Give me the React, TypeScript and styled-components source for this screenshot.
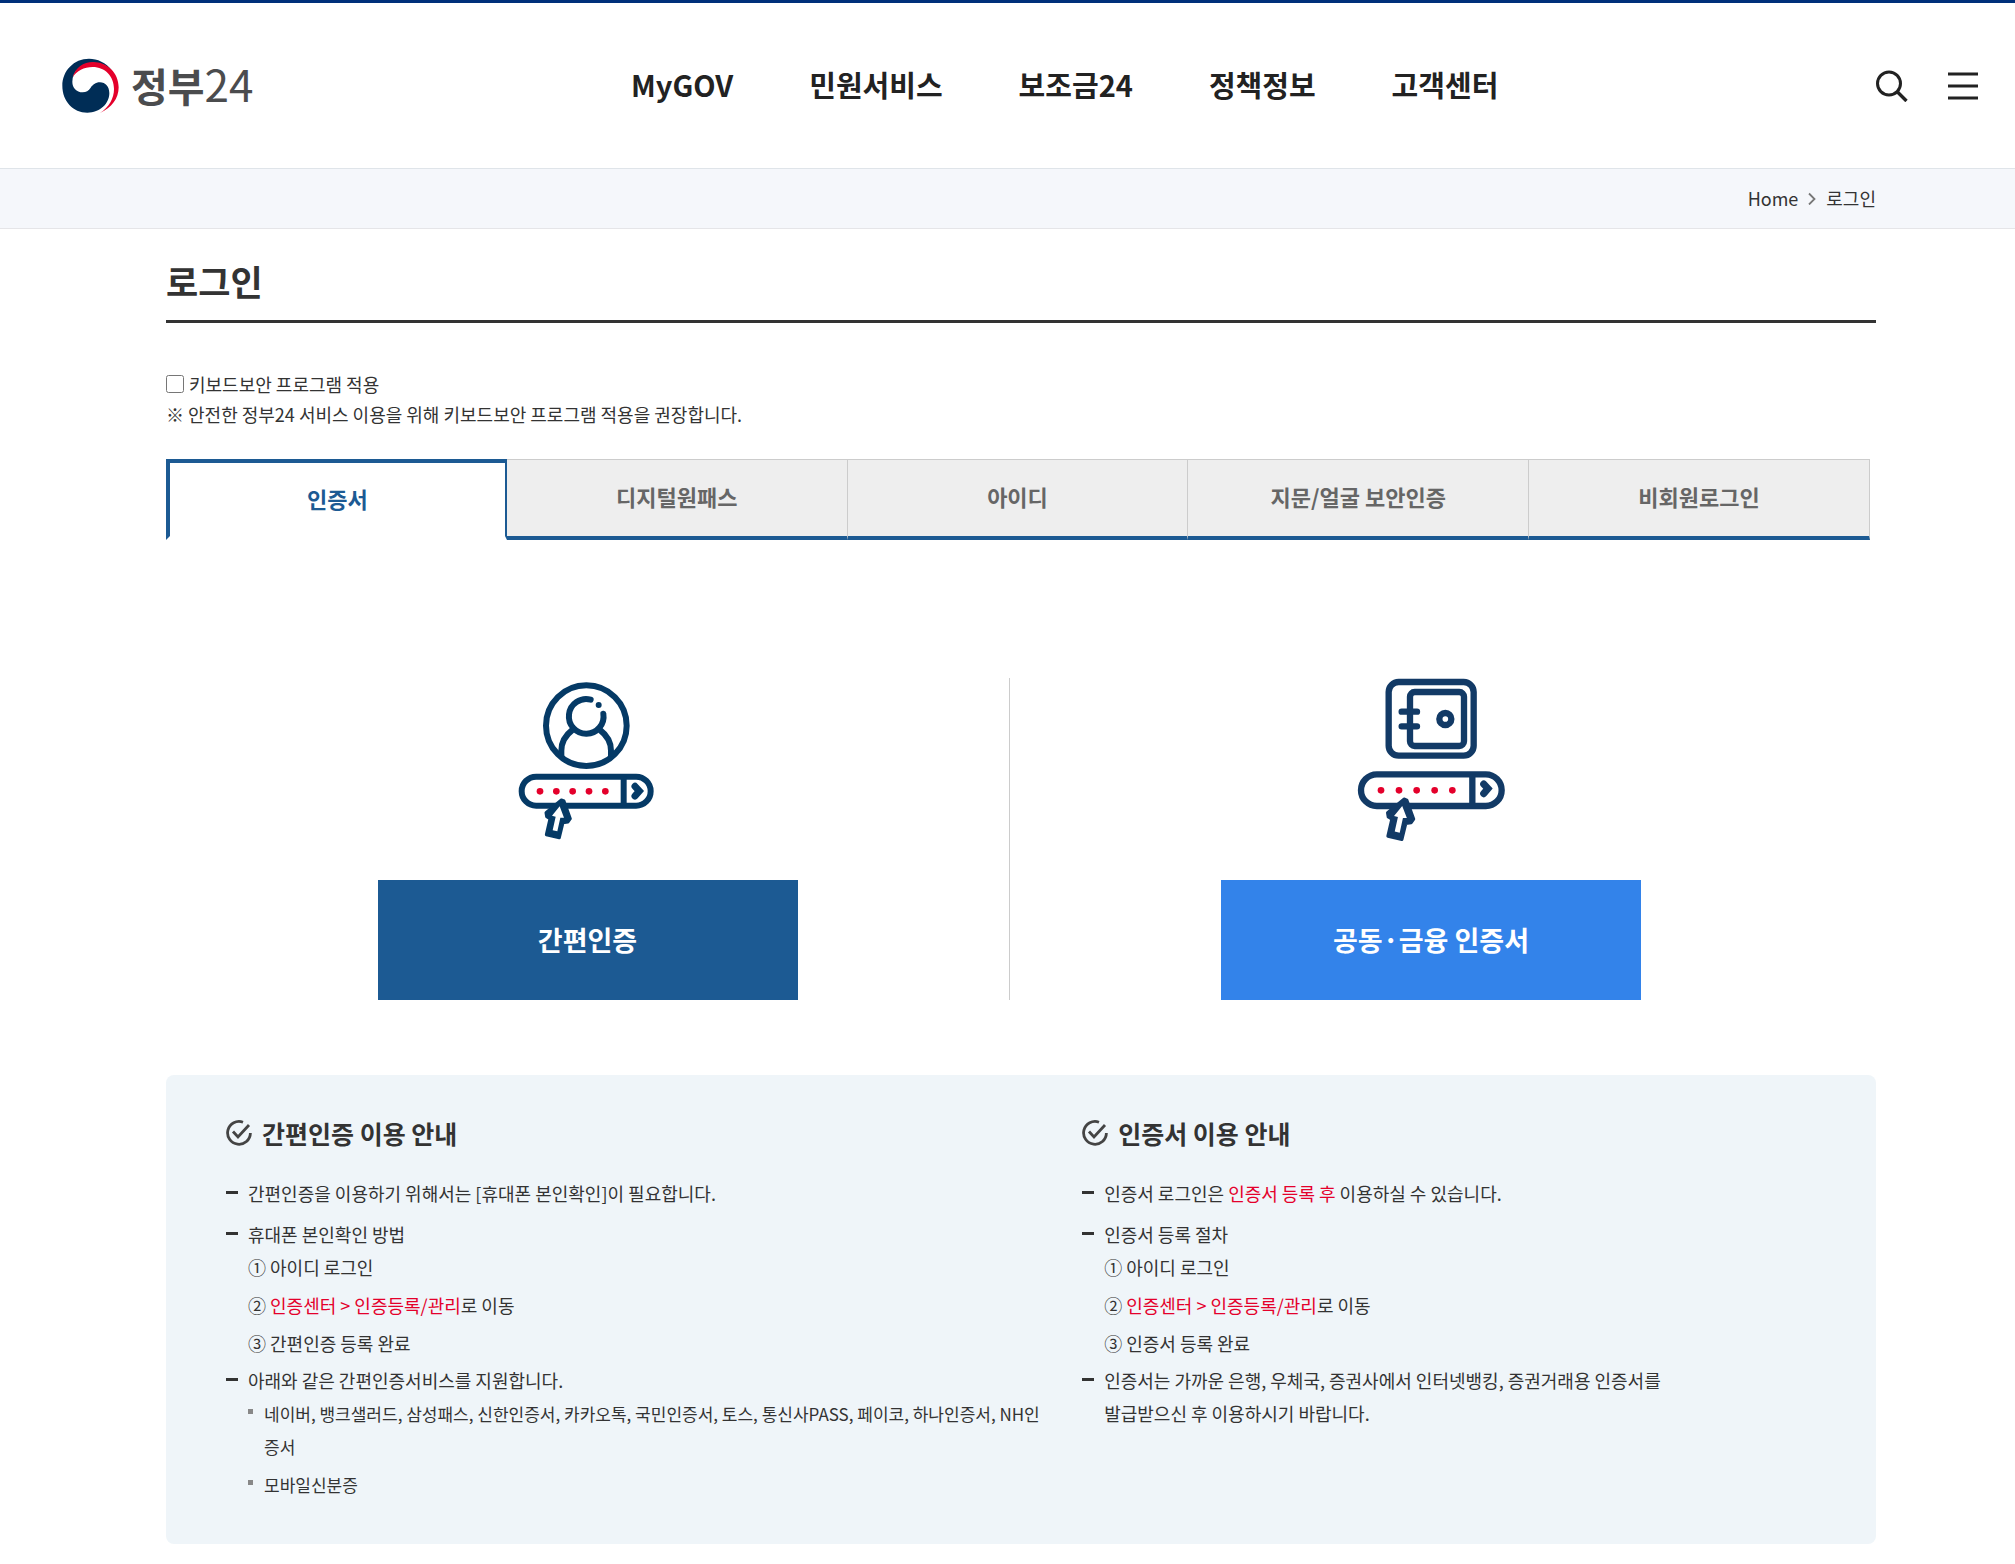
import React, { useState } from "react";
import styled, { createGlobalStyle } from "styled-components";

const color = {
  text: "#333333",
  blue: "#1c5a93",
  bright: "#3383ea",
  red: "#e4002b",
  line: "#cccccc",
};

const GlobalStyle = createGlobalStyle`
  *, *::before, *::after { box-sizing: border-box; }
  body {
    margin: 0;
    background: #ffffff;
    color: ${color.text};
    font-family: "Noto Sans CJK KR", "Noto Sans", sans-serif;
    font-size: 18px;
    line-height: 30px;
  }
  h1, h2, p, ul, ol { margin: 0; padding: 0; }
  ul, ol { list-style: none; }
  a { color: inherit; text-decoration: none; }
  button { font: inherit; color: inherit; cursor: pointer; }
`;

const Header = styled.header`
  display: grid;
  grid-template-columns: auto 1fr auto;
  align-items: center;
  height: 168px;
  padding: 0 37px 0 62px;
  border-top: 3px solid #00307a;
`;

const Logo = styled.a`
  display: flex;
  align-items: center;
  gap: 12px;
  color: #4b4c4e;
`;

const LogoName = styled.span`
  padding-bottom: 4px;
  font-size: 40px;
  line-height: 56px;
  font-weight: 700;
`;

const LogoNumber = styled.span`
  font-size: 44px;
  font-weight: 400;
`;

const Nav = styled.nav`
  padding-bottom: 4px;
  ul {
    display: flex;
    justify-content: center;
    gap: 76px;
  }
  a {
    color: #222222;
    font-size: 29px;
    line-height: 44px;
    font-weight: 700;
  }
`;

const Tools = styled.div`
  display: flex;
  gap: 40px;
`;

const IconButton = styled.button`
  display: flex;
  padding: 0;
  border: 0;
  background: none;
`;

const CrumbBar = styled.nav`
  height: 61px;
  padding: 0 139px 2px;
  background: #f5f7fb;
  border-top: 1px solid #dfe4e9;
  border-bottom: 1px solid #e5e5e8;
  ol {
    display: flex;
    justify-content: flex-end;
    align-items: center;
    gap: 10px;
    height: 100%;
  }
  li {
    display: flex;
    align-items: center;
    gap: 10px;
  }
`;

const Main = styled.main`
  padding: 0 139px 21px 166px;
`;

const Title = styled.h1`
  padding: 24px 0 11px;
  border-bottom: 3px solid ${color.text};
  font-size: 35px;
  line-height: 56px;
  font-weight: 700;
`;

const Security = styled.div`
  padding: 46px 0 30px;
`;

const CheckLabel = styled.label`
  display: flex;
  align-items: center;
  gap: 5px;
  width: fit-content;
  input {
    width: 18px;
    height: 18px;
    margin: 0;
  }
`;

const Tabs = styled.div`
  display: grid;
  grid-template-columns: repeat(5, 1fr);
  height: 81px;
  padding-right: 6px;
`;

const Tab = styled.button<{ $active: boolean }>`
  padding: 0 0 4px;
  border-style: solid;
  border-width: ${(p) => (p.$active ? "4px 2px 4px 4px" : "1px 1px 4px 0")};
  border-color: ${(p) =>
    p.$active
      ? `${color.blue} ${color.blue} #ffffff`
      : `${color.line} ${color.line} ${color.blue}`};
  background: ${(p) => (p.$active ? "#ffffff" : "#eeeeee")};
  color: ${(p) => (p.$active ? color.blue : "#666666")};
  font-size: 22px;
  line-height: 32px;
  font-weight: 700;
`;

const Methods = styled.div`
  display: grid;
  grid-template-columns: 1fr 1fr;
  margin: 138px 24px 0 0;
`;

const Method = styled.section`
  display: flex;
  flex-direction: column;
  align-items: center;
  gap: 38px;
  & + & {
    border-left: 1px solid ${color.line};
  }
`;

const Picture = styled.div`
  display: flex;
  align-items: center;
  height: 164px;
`;

const MethodButton = styled.button<{ $tone: string }>`
  width: 420px;
  height: 120px;
  padding: 0;
  border: 0;
  background: ${(p) => p.$tone};
  color: #ffffff;
  font-size: 27px;
  line-height: 40px;
  font-weight: 700;
`;

const Guide = styled.div`
  display: grid;
  grid-template-columns: 7fr 6fr;
  margin-top: 75px;
  padding: 39px 60px 43px;
  border-radius: 8px;
  background: #eff5f9;
`;

const GuideColumn = styled.section`
  padding-right: 36px;
`;

const GuideTitle = styled.h2`
  display: flex;
  align-items: center;
  gap: 10px;
  margin-bottom: 25px;
  font-size: 25px;
  line-height: 38px;
  font-weight: 700;
`;

const DashItem = styled.li`
  padding-left: 22px;
  line-height: 33px;
  &::before {
    content: "";
    float: left;
    width: 12px;
    height: 3px;
    margin: 14px 0 0 -22px;
    background: ${color.text};
  }
  & + & {
    margin-top: 8px;
  }
  &:has(ol) + & {
    margin-top: 4px;
  }
`;

const Steps = styled.ol`
  display: grid;
  gap: 5px;
`;

const Services = styled.ul`
  display: grid;
  gap: 5px;
  font-size: 17px;
  li {
    padding-left: 16px;
  }
  li::before {
    content: "";
    float: left;
    width: 5px;
    height: 5px;
    margin: 12px 0 0 -16px;
    background: #888888;
  }
`;

const Red = styled.span`
  color: ${color.red};
`;

const navy = "#002d56";

const Emblem = () => (
  <svg width="57" height="55" viewBox="20 24 171 165" aria-hidden="true">
    <path
      fill={navy}
      d="M170 62C152 37 126 26 101 26 56 26 21 62 21 107c0 46 32 81 75 81 38 0 66-27 66-59 0-19-12-32-28-32-14 0-22 8-28 16-6 9-14 14-24 14-19 0-31-14-31-32 0-31 27-55 60-57 23-1 43 8 59 24z"
    />
    <path
      fill={color.red}
      d="M52 82C60 53 84 36 113 36c43 0 77 33 77 76 0 33-21 62-56 77 28-18 42-44 42-72 0-38-27-66-64-66-26 0-48 12-60 31z"
    />
  </svg>
);

const SearchIcon = () => (
  <svg width="32" height="32" viewBox="0 0 32 32" fill="none" stroke="#222" strokeWidth="3">
    <circle cx="13" cy="13.5" r="11.5" />
    <path d="M21.5 22l9 9" strokeWidth="3.4" />
  </svg>
);

const MenuIcon = () => (
  <svg width="30" height="32" viewBox="0 0 30 32" fill="none" stroke="#222" strokeWidth="3.2">
    <path d="M0 4h30M0 16h30M0 28h30" />
  </svg>
);

const Chevron = () => (
  <svg width="8" height="14" viewBox="0 0 8 14" fill="none" stroke="#777" strokeWidth="1.8">
    <path d="M1 2.500l5.500 5.500-5.500 5.500" />
  </svg>
);

const CheckMark = () => (
  <svg width="26" height="26" viewBox="0 0 26 26" fill="none" stroke="#444" strokeWidth="2.8">
    <path d="M17 2.200A11.400 11.400 0 1 0 24.400 13" />
    <path d="M7 11.500l5 5.500L23 5" />
  </svg>
);

type PillProps = {
  x: number;
  y: number;
  w: number;
  h: number;
  split: number;
  dots: number[];
  ink: string;
  arrow: number;
};

/* Password pill with the pressed arrow, shared by both pictures. */
const Pill = ({ x, y, w, h, split, dots, ink, arrow }: PillProps) => (
  <>
    <rect x={x} y={y} width={w} height={h} rx={h / 2} />
    <path d={`M${split} ${y}v${h}`} />
    <path d={`M${split + 34} ${y + 29}l13 14-13 15`} strokeLinecap="round" strokeWidth="21" />
    {dots.map((d) => (
      <circle key={d} cx={d} cy="391" r="10" fill={color.red} stroke="none" />
    ))}
    <g transform={`translate(${dots[1] + 15} 412) scale(${arrow})`} strokeLinejoin="round">
      <path
        d="M0 5L-46 43l2 12 10 6-11 48 39 9 11-45 15-2 7-10L8 8z"
        fill={ink}
        stroke={ink}
        strokeWidth="9"
      />
      <path d="M-5 24l-23 28 11 3-9 41 14 3 9-41 11 0z" fill="#fff" stroke="none" />
    </g>
  </>
);

const SimpleArt = () => {
  const ink = "#053a66";
  return (
    <svg width="140" height="159" viewBox="112 60 420 477" fill="none" stroke={ink} strokeWidth="18" aria-hidden="true">
      <circle cx="317" cy="194" r="121" />
      <path d="M330 116a52 52 0 1 0 38 42" strokeLinecap="round" />
      <path d="M242 287v-18c0-28 12-46 33-62M391 287v-18c0-28-12-46-33-62" />
      <circle cx="354" cy="132" r="9" fill={ink} stroke="none" />
      <Pill x={123} y={347} w={387} h={87} split={429} dots={[178, 227, 276, 325, 374]} ink={ink} arrow={1} />
    </svg>
  );
};

const SafeArt = () => {
  const ink = "#123a66";
  return (
    <svg width="149" height="164" viewBox="80 54 447 492" fill="none" stroke={ink} strokeWidth="19" aria-hidden="true">
      <rect x="175" y="66" width="255" height="221" rx="30" />
      <rect x="239" y="96" width="162" height="162" rx="14" />
      <path d="M214 155h46M214 199h46" strokeLinecap="round" />
      <circle cx="345" cy="177" r="18" />
      <Pill x={92} y={343} w={422} h={95} split={426} dots={[152, 206, 259, 313, 366]} ink={ink} arrow={1.07} />
    </svg>
  );
};

const menu = ["MyGOV", "민원서비스", "보조금24", "정책정보", "고객센터"];
const tabs = ["인증서", "디지털원패스", "아이디", "지문/얼굴 보안인증", "비회원로그인"];

export default function App() {
  const [active, setActive] = useState(0);
  return (
    <>
      <GlobalStyle />
      <Header>
        <Logo href="#">
          <Emblem />
          <LogoName>정부<LogoNumber>24</LogoNumber></LogoName>
        </Logo>
        <Nav>
          <ul>
            {menu.map((m) => (
              <li key={m}><a href="#">{m}</a></li>
            ))}
          </ul>
        </Nav>
        <Tools>
          <IconButton type="button" aria-label="검색"><SearchIcon /></IconButton>
          <IconButton type="button" aria-label="전체메뉴"><MenuIcon /></IconButton>
        </Tools>
      </Header>
      <CrumbBar>
        <ol>
          <li><a href="#">Home</a><Chevron /></li>
          <li>로그인</li>
        </ol>
      </CrumbBar>
      <Main>
        <Title>로그인</Title>
        <Security>
          <CheckLabel htmlFor="keyboard">
            <input id="keyboard" type="checkbox" />
            키보드보안 프로그램 적용
          </CheckLabel>
          <p>※ 안전한 정부24 서비스 이용을 위해 키보드보안 프로그램 적용을 권장합니다.</p>
        </Security>
        <Tabs role="tablist">
          {tabs.map((t, i) => (
            <Tab
              key={t}
              type="button"
              role="tab"
              aria-selected={i === active}
              $active={i === active}
              onClick={() => setActive(i)}
            >
              {t}
            </Tab>
          ))}
        </Tabs>
        <Methods>
          <Method>
            <Picture><SimpleArt /></Picture>
            <MethodButton type="button" $tone={color.blue}>간편인증</MethodButton>
          </Method>
          <Method>
            <Picture><SafeArt /></Picture>
            <MethodButton type="button" $tone={color.bright}>공동·금융 인증서</MethodButton>
          </Method>
        </Methods>
        <Guide>
          <GuideColumn>
            <GuideTitle><CheckMark />간편인증 이용 안내</GuideTitle>
            <ul>
              <DashItem>간편인증을 이용하기 위해서는 [휴대폰 본인확인]이 필요합니다.</DashItem>
              <DashItem>
                휴대폰 본인확인 방법
                <Steps>
                  <li>① 아이디 로그인</li>
                  <li>② <Red>인증센터 &gt; 인증등록/관리</Red>로 이동</li>
                  <li>③ 간편인증 등록 완료</li>
                </Steps>
              </DashItem>
              <DashItem>
                아래와 같은 간편인증서비스를 지원합니다.
                <Services>
                  <li>네이버, 뱅크샐러드, 삼성패스, 신한인증서, 카카오톡, 국민인증서, 토스, 통신사PASS, 페이코, 하나인증서, NH인증서</li>
                  <li>모바일신분증</li>
                </Services>
              </DashItem>
            </ul>
          </GuideColumn>
          <GuideColumn>
            <GuideTitle><CheckMark />인증서 이용 안내</GuideTitle>
            <ul>
              <DashItem>인증서 로그인은 <Red>인증서 등록 후</Red> 이용하실 수 있습니다.</DashItem>
              <DashItem>
                인증서 등록 절차
                <Steps>
                  <li>① 아이디 로그인</li>
                  <li>② <Red>인증센터 &gt; 인증등록/관리</Red>로 이동</li>
                  <li>③ 인증서 등록 완료</li>
                </Steps>
              </DashItem>
              <DashItem>
                인증서는 가까운 은행, 우체국, 증권사에서 인터넷뱅킹, 증권거래용 인증서를
                <br />
                발급받으신 후 이용하시기 바랍니다.
              </DashItem>
            </ul>
          </GuideColumn>
        </Guide>
      </Main>
    </>
  );
}
